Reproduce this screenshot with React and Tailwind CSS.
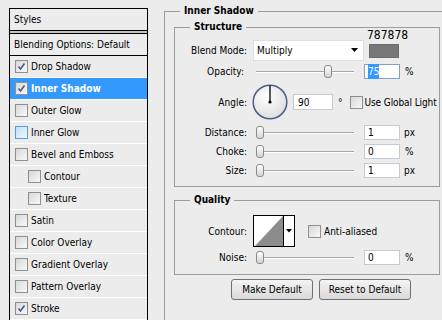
import React from "react";

const layers = [
  { label: "Drop Shadow", checked: true },
  { label: "Inner Shadow", checked: true, active: true },
  { label: "Outer Glow" },
  { label: "Inner Glow", hover: true },
  { label: "Bevel and Emboss" },
  { label: "Contour", sub: true },
  { label: "Texture", sub: true },
  { label: "Satin" },
  { label: "Color Overlay" },
  { label: "Gradient Overlay" },
  { label: "Pattern Overlay" },
  { label: "Stroke", checked: true },
];

function CheckBox({ checked, hover }) {
  const look = hover
    ? "border-[#5d9bd0] bg-linear-to-br from-[#c2e1fa] to-[#eef8ff]"
    : "border-[#8e8f8f] bg-linear-to-br from-[#d8d8d8] to-[#f9f9f9]";
  return (
    <span className={`flex h-[13px] w-[13px] shrink-0 items-center justify-center border ${look}`}>
      {checked && (
        <svg width="9" height="9" viewBox="0 0 9 9">
          <path d="M1.5 4.5 L3.5 7 L7.5 1.5" fill="none" stroke="#4b5a8c" strokeWidth="1.6" />
        </svg>
      )}
    </span>
  );
}

function Slider({ value }) {
  return (
    <div className="relative ml-[9px] h-[13px] w-[98px]">
      <div className="absolute left-0 right-0 top-[6px] h-[2px] border-t border-[#a8a8a8] bg-white" />
      <div
        className="absolute top-0 h-[13px] w-[8px] rounded-[3px] border border-[#8a8a8a] bg-linear-to-b from-white to-[#d4d4d4]"
        style={{ left: value * 90 }}
      />
    </div>
  );
}

function Field({ children, focused }) {
  return (
    <div
      className={`ml-[10px] flex h-[15px] w-[36px] items-center border bg-white pl-[3px] ${
        focused ? "border-[#7da2ce]" : "border-[#c3cbd5]"
      }`}
    >
      {children}
    </div>
  );
}

function Label({ children }) {
  return <span className="w-[72px] shrink-0 text-right">{children}</span>;
}

function Legend({ children }) {
  return (
    <span className="absolute -top-[8px] left-[15px] bg-[#ececec] px-[4px] font-bold leading-[13px]">
      {children}
    </span>
  );
}

export default function App() {
  return (
    <div className="flex h-[320px] w-[442px] items-start overflow-hidden bg-[#ececec] font-['DejaVu_Sans_Condensed','DejaVu_Sans',sans-serif] text-[10px] text-black">
      {/* styles list */}
      <div className="ml-[9px] mt-[8px] h-[330px] w-[139px] shrink-0 border border-black">
        <div className="flex h-[22px] items-center border-b border-black pl-[4px]">Styles</div>
        <div className="h-[2px] bg-[#c4c4c4]" />
        <div className="flex h-[23px] items-center border-y border-black pl-[4px]">
          Blending Options: Default
        </div>
        {layers.map((l) => (
          <div
            key={l.label}
            className={`flex h-[22px] items-center gap-[3px] border-b border-white ${
              l.sub ? "pl-[18px]" : "pl-[5px]"
            } ${l.active ? "bg-[#3399ff] font-bold text-white" : ""}`}
          >
            <CheckBox checked={l.checked} hover={l.hover} />
            {l.label}
          </div>
        ))}
      </div>

      {/* Inner Shadow */}
      <div className="relative ml-[16px] mt-[11px] h-[330px] w-[320px] shrink-0 border-l border-t border-[#9c9c9c] pl-[9px] pt-[15px]">
        <Legend>Inner Shadow</Legend>

        <div className="relative h-[160px] w-[266px] border border-[#9c9c9c]">
          <Legend>Structure</Legend>

          <div className="mt-[12px] flex h-[21px] items-center">
            <Label>Blend Mode:</Label>
            <div className="ml-[6px] flex h-[21px] w-[111px] items-center justify-between border border-[#dedede] bg-white pl-[3px] pr-[4px]">
              Multiply
              <svg width="8" height="5" viewBox="0 0 8 5">
                <path d="M0 0 H7 L3.5 4 Z" fill="#000" />
              </svg>
            </div>
            <div className="relative ml-[5px] h-[14px] w-[30px] border border-[#6c6c6c] bg-[#787878]">
              <span className="absolute -left-[3px] -top-[17px] text-[12px] leading-[14px]">787878</span>
            </div>
          </div>

          <div className="mt-[3px] flex h-[15px] items-center">
            <span className="w-[72px] shrink-0 pr-[3px] text-right">Opacity:</span>
            <Slider value={0.75} />
            <Field focused>
              <span className="bg-[#3399ff] text-white">75</span>
            </Field>
            <span className="ml-[5px]">%</span>
          </div>

          <div className="mt-[5px] flex h-[36px] items-center whitespace-nowrap">
            <Label>Angle:</Label>
            <svg className="ml-[5px] shrink-0" width="36" height="36" viewBox="0 0 36 36">
              <defs>
                <radialGradient id="dial" cx="0.4" cy="0.35" r="0.7">
                  <stop offset="0" stopColor="#ffffff" />
                  <stop offset="1" stopColor="#dcdcdc" />
                </radialGradient>
              </defs>
              <circle cx="18" cy="18" r="16.8" fill="url(#dial)" stroke="#4d5d86" strokeWidth="1.5" />
              <line x1="18" y1="18" x2="18" y2="1.5" stroke="#000" strokeWidth="1.3" />
              <circle cx="18" cy="18" r="1.6" fill="#000" />
            </svg>
            <div className="ml-[5px] flex h-[16px] w-[40px] shrink-0 items-center border border-[#c3cbd5] bg-white pl-[4px]">
              90
            </div>
            <span className="ml-[5px]">°</span>
            <span className="ml-[7px]">
              <CheckBox />
            </span>
            <span className="ml-[2px] tracking-[-0.1px]">Use Global Light</span>
          </div>

          <div className="mt-[5px] flex h-[15px] items-center">
            <Label>Distance:</Label>
            <Slider value={0} />
            <Field>1</Field>
            <span className="ml-[4px]">px</span>
          </div>
          <div className="mt-[4px] flex h-[15px] items-center">
            <Label>Choke:</Label>
            <Slider value={0} />
            <Field>0</Field>
            <span className="ml-[5px]">%</span>
          </div>
          <div className="mt-[4px] flex h-[15px] items-center">
            <Label>Size:</Label>
            <Slider value={0} />
            <Field>1</Field>
            <span className="ml-[4px]">px</span>
          </div>
        </div>

        <div className="relative mt-[13px] h-[75px] w-[266px] border border-[#9c9c9c]">
          <Legend>Quality</Legend>

          <div className="mt-[14px] flex h-[32px] items-center">
            <Label>Contour:</Label>
            <div className="ml-[6px] flex h-[32px] w-[42px] border border-black bg-white">
              <svg width="29" height="30" viewBox="0 0 29 30">
                <path d="M1 30 L29 0 V30 Z" fill="#8c8c8c" />
              </svg>
              <div className="flex flex-1 items-center justify-center border-l border-black">
                <svg width="6" height="4" viewBox="0 0 6 4">
                  <path d="M0 0 H6 L3 3.5 Z" fill="#000" />
                </svg>
              </div>
            </div>
            <span className="ml-[13px]">
              <CheckBox />
            </span>
            <span className="ml-[3px]">Anti-aliased</span>
          </div>

          <div className="mt-[3px] flex h-[15px] items-center">
            <Label>Noise:</Label>
            <Slider value={0} />
            <Field>0</Field>
            <span className="ml-[5px]">%</span>
          </div>
        </div>

        <div className="ml-[57px] mt-[4px] flex gap-[6px]">
          <button className="flex h-[21px] w-[82px] items-center justify-center rounded-[3px] border border-[#707070] bg-linear-to-b from-[#f4f4f4] to-[#d9d9d9]">
            Make Default
          </button>
          <button className="flex h-[21px] w-[92px] items-center justify-center rounded-[3px] border border-[#707070] bg-linear-to-b from-[#f4f4f4] to-[#d9d9d9]">
            Reset to Default
          </button>
        </div>
      </div>
    </div>
  );
}
